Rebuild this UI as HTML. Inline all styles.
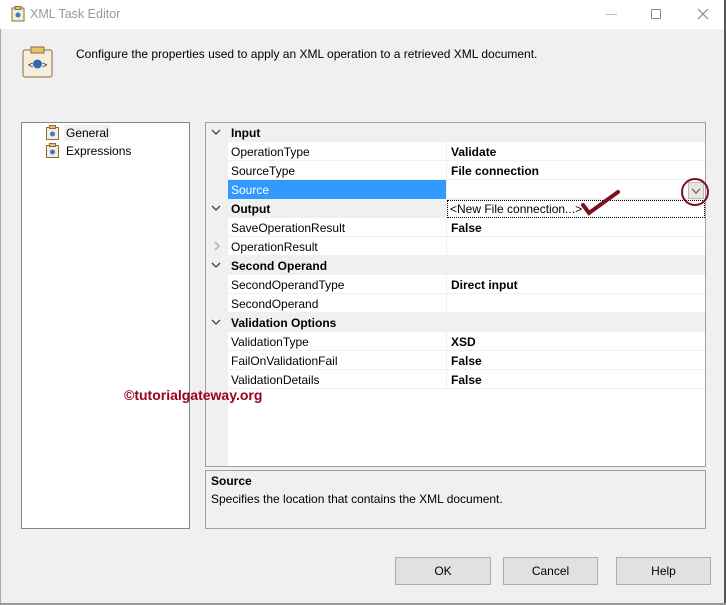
<!DOCTYPE html>
<html><head><style>
*{box-sizing:border-box;margin:0;padding:0}
body{width:726px;height:605px;background:#f0f0f0;font-family:"Liberation Sans",sans-serif;font-size:12px;color:#000;position:relative;overflow:hidden}
.a{position:absolute}
.title{left:0;top:0;width:726px;height:29px;background:#fff}
.row{position:absolute;left:206px;width:499px;height:19px;border-bottom:1px solid #f0f0f0}
.row .n{position:absolute;left:25px;top:3px}
.row .v{position:absolute;left:245px;top:3px;font-weight:bold}
.row .sep{position:absolute;left:240px;top:0;width:1px;height:19px;background:#f0f0f0}
.cat{background:#f0f0f0}
.cat .n{font-weight:bold}
.chev{position:absolute;left:5px;top:5px}
.btn{position:absolute;top:557px;height:28px;background:#e1e1e1;border:1px solid #adadad;text-align:center;line-height:26px}
</style></head><body>
<div class="a title"></div>
<div class="a" style="left:724px;top:0;width:2px;height:605px;background:#555"></div>
<div class="a" style="left:0;top:29px;width:1px;height:576px;background:#aaa"></div>
<div class="a" style="left:0;top:603px;width:726px;height:2px;background:#999"></div>
<svg class="a" style="left:10px;top:6px" width="16" height="16"><rect x="2" y="2" width="12" height="13" fill="#f5eedc" stroke="#8a6d3b"/><rect x="5" y="0.5" width="6" height="3" fill="#e6c46a" stroke="#8a6d3b"/><circle cx="8" cy="9" r="2.5" fill="#3a7bc8"/></svg>
<div class="a" style="left:30px;top:7px;font-size:12.5px;color:#999">XML Task Editor</div>
<div class="a" style="left:606px;top:14px;width:11px;height:1px;background:#bbb"></div>
<div class="a" style="left:651px;top:9px;width:10px;height:10px;border:1px solid #888"></div>
<svg class="a" style="left:697px;top:8px" width="12" height="12"><path d="M1 1L11 11M11 1L1 11" stroke="#888" stroke-width="1.2"/></svg>
<svg class="a" style="left:22px;top:46px" width="32" height="32"><rect x="1" y="4" width="29" height="27" rx="2" fill="#f5eedc" stroke="#8a6d3b"/><rect x="9" y="1" width="13" height="6" fill="#e6c46a" stroke="#8a6d3b"/><text x="6" y="22" font-size="9" font-family="Liberation Sans">&lt;</text><text x="20" y="22" font-size="9" font-family="Liberation Sans">&gt;</text><circle cx="15.5" cy="18" r="4.5" fill="#2b6bb8"/></svg>
<div class="a" style="left:76px;top:47px">Configure the properties used to apply an XML operation to a retrieved XML document.</div>
<div class="a" style="left:21px;top:122px;width:169px;height:407px;background:#fff;border:1px solid #828790"></div>
<svg class="a" style="left:45px;top:125px" width="16" height="16"><rect x="1.5" y="2.5" width="12" height="12" fill="#f5eedc" stroke="#8a6d3b"/><rect x="4.5" y="0.5" width="6" height="3" fill="#e6c46a" stroke="#8a6d3b"/><circle cx="7.5" cy="9" r="2.5" fill="#3a7bc8"/></svg>
<svg class="a" style="left:45px;top:143px" width="16" height="16"><rect x="1.5" y="2.5" width="12" height="12" fill="#f5eedc" stroke="#8a6d3b"/><rect x="4.5" y="0.5" width="6" height="3" fill="#e6c46a" stroke="#8a6d3b"/><circle cx="7.5" cy="9" r="2.5" fill="#3a7bc8"/></svg>
<div class="a" style="left:64px;top:125px;background:#f0f0f0;padding:1px 2px">General</div>
<div class="a" style="left:66px;top:144px">Expressions</div>
<div class="a" style="left:205px;top:122px;width:501px;height:345px;background:#fff;border:1px solid #a0a0a0"></div>
<div class="a" style="left:206px;top:123px;width:22px;height:343px;background:#f0f0f0"></div>

<div class="row cat" style="top:123px"><svg class="chev" width="10" height="8"><path d="M1 2L5 6L9 2" fill="none" stroke="#444" stroke-width="1.3"/></svg><span class="n">Input</span></div>
<div class="row" style="top:142px"><span class="n">OperationType</span><span class="sep"></span><span class="v">Validate</span></div>
<div class="row" style="top:161px"><span class="n">SourceType</span><span class="sep"></span><span class="v">File connection</span></div>
<div class="row" style="top:180px"><span class="a" style="left:22px;top:0;width:218px;height:19px;background:#3399ff"></span><span class="n" style="color:#fff">Source</span><span class="sep"></span></div>
<div class="row cat" style="top:199px"><svg class="chev" width="10" height="8"><path d="M1 2L5 6L9 2" fill="none" stroke="#444" stroke-width="1.3"/></svg><span class="n">Output</span></div>
<div class="row" style="top:218px"><span class="n">SaveOperationResult</span><span class="sep"></span><span class="v">False</span></div>
<div class="row" style="top:237px"><svg class="chev" style="left:7px;top:4px" width="8" height="10"><path d="M2 1L6 5L2 9" fill="none" stroke="#aaa" stroke-width="1.3"/></svg><span class="n">OperationResult</span><span class="sep"></span></div>
<div class="row cat" style="top:256px"><svg class="chev" width="10" height="8"><path d="M1 2L5 6L9 2" fill="none" stroke="#444" stroke-width="1.3"/></svg><span class="n">Second Operand</span></div>
<div class="row" style="top:275px"><span class="n">SecondOperandType</span><span class="sep"></span><span class="v">Direct input</span></div>
<div class="row" style="top:294px"><span class="n">SecondOperand</span><span class="sep"></span></div>
<div class="row cat" style="top:313px"><svg class="chev" width="10" height="8"><path d="M1 2L5 6L9 2" fill="none" stroke="#444" stroke-width="1.3"/></svg><span class="n">Validation Options</span></div>
<div class="row" style="top:332px"><span class="n">ValidationType</span><span class="sep"></span><span class="v">XSD</span></div>
<div class="row" style="top:351px"><span class="n">FailOnValidationFail</span><span class="sep"></span><span class="v">False</span></div>
<div class="row" style="top:370px"><span class="n">ValidationDetails</span><span class="sep"></span><span class="v">False</span></div>

<div class="a" style="left:688px;top:182px;width:16px;height:17px;background:#e5e5e5;border:1px solid #bbb"></div>
<svg class="a" style="left:691px;top:187px" width="10" height="8"><path d="M1 2L5 6L9 2" fill="none" stroke="#555" stroke-width="1.2"/></svg>
<div class="a" style="left:447px;top:200px;width:258px;height:18px;background:#fff;border:1px dotted #000;padding:1px 2px">&lt;New File connection...&gt;</div>
<svg class="a" style="left:575px;top:175px" width="140" height="45"><circle cx="120" cy="17" r="13" fill="none" stroke="#7a1020" stroke-width="2"/><path d="M8 30 L14 38 L43 17" fill="none" stroke="#7a1020" stroke-width="4" stroke-linecap="round"/></svg>

<div class="a" style="left:124px;top:387px;font-weight:bold;font-size:14px;color:#990022">©tutorialgateway.org</div>

<div class="a" style="left:205px;top:470px;width:501px;height:59px;border:1px solid #a0a0a0;background:#f0f0f0"></div>
<div class="a" style="left:211px;top:474px;font-weight:bold">Source</div>
<div class="a" style="left:211px;top:492px">Specifies the location that contains the XML document.</div>

<div class="btn" style="left:395px;width:96px">OK</div>
<div class="btn" style="left:503px;width:95px">Cancel</div>
<div class="btn" style="left:616px;width:95px">Help</div>
</body></html>
